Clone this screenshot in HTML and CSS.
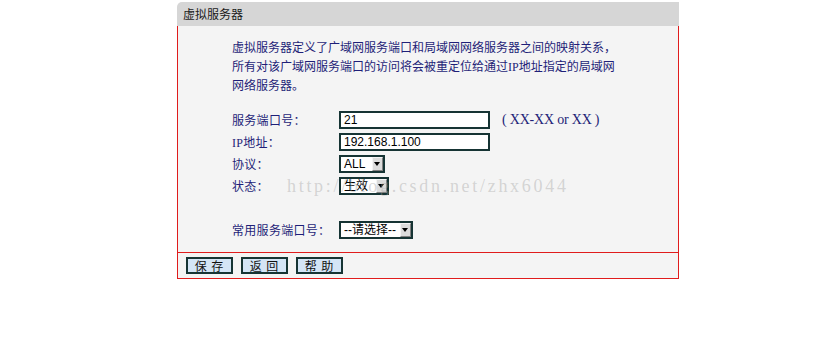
FILE: index.html
```html
<!DOCTYPE html>
<html>
<head>
<meta charset="utf-8">
<link rel="stylesheet" href="styles.css">
</head>
<body>
<div class="panel">
  <div class="panel-head">虚拟服务器</div>
  <div class="panel-body">
    <p class="desc">虚拟服务器定义了广域网服务端口和局域网网络服务器之间的映射关系，<br>所有对该广域网服务端口的访问将会被重定位给通过IP地址指定的局域网<br>网络服务器。</p>
    <div class="form">
      <div class="row">
        <span class="label">服务端口号：</span>
        <span class="input">21</span>
        <span class="hint">( XX-XX or XX )</span>
      </div>
      <div class="row">
        <span class="label">IP地址：</span>
        <span class="input">192.168.1.100</span>
      </div>
      <div class="row">
        <span class="label">协议：</span>
        <span class="select w-all"><span class="sel-text">ALL</span><span class="arrow"></span></span>
      </div>
      <div class="row">
        <span class="label">状态：</span>
        <span class="select w-state"><span class="sel-text cjk">生效</span><span class="arrow"></span></span>
      </div>
      <div class="row row-gap">
        <span class="label">常用服务端口号：</span>
        <span class="select w-common"><span class="sel-text">--请选择--</span><span class="arrow"></span></span>
      </div>
    </div>
  </div>
  <div class="panel-foot">
    <span class="btn">保 存</span>
    <span class="btn">返 回</span>
    <span class="btn">帮 助</span>
  </div>
</div>
<div class="watermark">http://blog.csdn.net/zhx6044</div>
</body>
</html>
```

FILE: styles.css
```css
html, body {
  margin: 0;
  padding: 0;
  background: #ffffff;
}
body {
  position: relative;
  width: 840px;
  height: 354px;
  font-family: "Liberation Serif", "Noto Sans CJK SC", serif;
  font-size: 12px;
}
.panel {
  margin: 2px 0 0 177px;
  width: 502px;
}
.panel-head {
  height: 24px;
  line-height: 24px;
  background: #d6d6d6;
  border-top-left-radius: 5px;
  padding-left: 6px;
  color: #1a1a1a;
  font-family: "Noto Sans CJK SC", sans-serif;
  font-size: 12px;
}
.panel-body {
  background: #f4f4f4;
  border-left: 1px solid #e01c1c;
  border-right: 1px solid #e01c1c;
  padding: 13px 0 13px 54px;
}
.desc {
  margin: 0;
  line-height: 19px;
  color: #1f1f78;
  font-size: 12px;
}
.form {
  margin-top: 15px;
  display: flex;
  flex-direction: column;
  gap: 4px;
}
.row {
  display: flex;
  align-items: center;
  height: 18px;
}
.row-gap {
  margin-top: 22px;
}
.label {
  width: 107px;
  color: #1f1f78;
  font-size: 12px;
  letter-spacing: 0.3px;
}
.input {
  box-sizing: border-box;
  width: 151px;
  height: 18px;
  border: 2px solid #163434;
  background: #ffffff;
  font-family: "Liberation Sans", "Noto Sans CJK SC", sans-serif;
  font-size: 12px;
  line-height: 14px;
  padding-left: 3px;
  color: #000;
}
.hint {
  margin-left: 12px;
  color: #1f1f78;
  font-family: "Liberation Serif", serif;
  font-size: 14px;
  letter-spacing: -0.2px;
}
.select {
  box-sizing: border-box;
  display: flex;
  align-items: center;
  height: 18px;
  border: 2px solid #163434;
  background: #ffffff;
  font-family: "Liberation Sans", "Noto Sans CJK SC", sans-serif;
  font-size: 12px;
  color: #000;
}
.w-all { width: 46px; }
.w-state { width: 50px; }
.w-common { width: 74px; }
.sel-text {
  flex: 1;
  padding-left: 3px;
  line-height: 14px;
  white-space: nowrap;
  overflow: hidden;
}
.arrow {
  position: relative;
  box-sizing: border-box;
  width: 11px;
  height: 14px;
  background: #dcdcdc;
  border-top: 1px solid #f4f4f4;
  border-left: 1px solid #f4f4f4;
  border-right: 1px solid #808080;
  border-bottom: 1px solid #808080;
}
.arrow::after {
  content: "";
  position: absolute;
  left: 1px;
  top: 4px;
  border-left: 3.5px solid transparent;
  border-right: 3.5px solid transparent;
  border-top: 4px solid #000;
}
.panel-foot {
  display: flex;
  gap: 8px;
  background: #f4f4f4;
  border: 1px solid #e01c1c;
  padding: 4px 0 4px 8px;
}
.btn {
  box-sizing: border-box;
  width: 47px;
  height: 17px;
  border: 2px solid #163434;
  background: #d4e5f6;
  text-align: center;
  font-family: "Noto Sans CJK SC", sans-serif;
  font-size: 12px;
  line-height: 13px;
  color: #111;
  letter-spacing: 1px;
}
.watermark {
  position: absolute;
  left: 287px;
  top: 176px;
  font-family: "Liberation Serif", serif;
  font-size: 18px;
  letter-spacing: 2.7px;
  color: rgba(160, 160, 160, 0.4);
  pointer-events: none;
}
```
